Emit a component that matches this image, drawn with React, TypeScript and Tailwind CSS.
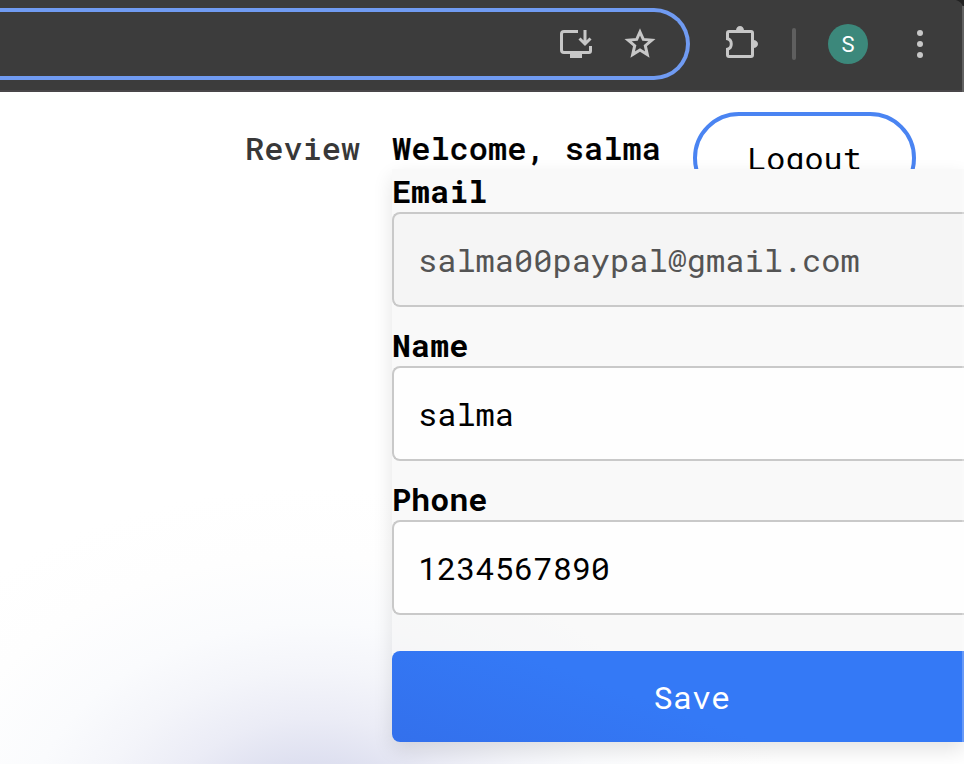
import type { ReactNode } from "react";

function InstallIcon() {
  return (
    <svg width="34" height="32" viewBox="0 0 34 32" fill="none" stroke="#c7c7c7" strokeWidth="3">
      <path d="M19 3.500H5Q2.500 3.500 2.500 6V22Q2.500 24.500 5 24.500H30Q31.500 24.500 31.500 23V18" />
      <path d="M26 2V15M20.500 10.500L26 16L31.500 10.500" />
      <path d="M11 27.500H23" strokeWidth="5" />
    </svg>
  );
}

function StarIcon() {
  return (
    <svg width="36" height="36" viewBox="0 0 36 36" fill="none" stroke="#c7c7c7" strokeWidth="3">
      <path d="M18 6L21.300 13.400L29.800 14.100L23.300 19.700L25.300 28.500L18 24L10.700 28.500L12.700 19.700L6.200 14.100L14.700 13.400Z" />
    </svg>
  );
}

function PuzzleIcon() {
  return (
    <svg width="36" height="36" viewBox="0 0 36 36">
      <path
        d="M5 6.500H27Q28.500 6.500 28.500 8V30Q28.500 31.500 27 31.500H5Q3.500 31.500 3.500 30V24.200C8.500 23 8.500 15 3.500 13.800V8Q3.500 6.500 5 6.500Z"
        fill="none"
        stroke="#c7c7c7"
        strokeWidth="3"
      />
      <path d="M12 5.500A4 4.500 0 0 1 20 5.500ZM29.500 15A4.500 4 0 0 1 29.500 23Z" fill="#c7c7c7" />
    </svg>
  );
}

function BrowserBar() {
  return (
    <div className="relative flex h-[92px] shrink-0 items-start border-b-2 border-[#494649] bg-[#3c3c3c]">
      <div className="mt-2 flex h-[72px] w-[690px] items-center justify-end rounded-r-full border-4 border-l-0 border-[#709bf2] pr-[28px]">
        <div className="mr-[29px] h-[32px]"><InstallIcon /></div>
        <StarIcon />
      </div>
      <div className="ml-[34px] mt-[25px] h-9"><PuzzleIcon /></div>
      <div className="ml-8 mt-7 h-8 w-1 rounded-sm bg-[#5f5f5f]" />
      <div className="ml-8 mt-6 flex size-10 items-center justify-center rounded-full bg-[#3c887b] font-['Roboto',sans-serif] text-[22px] text-white">S</div>
      <div className="ml-[49px] mt-[30px] flex flex-col gap-[5px]">
        <i className="size-[6px] rounded-full bg-[#c7c7c7]" />
        <i className="size-[6px] rounded-full bg-[#c7c7c7]" />
        <i className="size-[6px] rounded-full bg-[#c7c7c7]" />
      </div>
      <svg className="absolute right-0 top-0" width="8" height="8" viewBox="0 0 8 8">
        <path d="M0 0H8V8Q6 2 0 0Z" fill="#222" />
      </svg>
      <div className="absolute right-0 top-[6px] h-[86px] w-[2px] bg-[#626262]" />
    </div>
  );
}

function Field({ label, children, disabled = false }: { label: string; children: ReactNode; disabled?: boolean }) {
  return (
    <div className="mb-4">
      <div className="h-[43px] pt-px text-[31.800px] leading-[42px] font-bold">{label}</div>
      <div className={`flex h-[95px] items-center rounded-l-lg border-2 border-r-0 border-[#c9c9c9] pl-6 pt-px ${disabled ? "bg-[#f5f5f5] text-[#545454]" : "bg-white/85 text-black"}`}>
        {children}
      </div>
    </div>
  );
}

export default function App() {
  return (
    <div className="flex h-[764px] w-[964px] flex-col overflow-hidden bg-white font-['Roboto_Mono','DejaVu_Sans_Mono','Liberation_Mono',monospace] text-[32px] text-black">
      <BrowserBar />
      <main className="flex-1 overflow-hidden bg-[radial-gradient(ellipse_480px_340px_at_315px_735px,#d4d7ec_0%,#dcdeef_17%,#ebecf6_32%,#f4f5fa_46%,#fafbfd_60%,#fefefe_80%,#ffffff_100%)]">
        <header className="flex h-[77px] items-start overflow-hidden pl-[245px] leading-[42px]">
          <span className="mt-[35px] w-[147px] font-medium text-[#383838]">Review</span>
          <span className="mt-[35px] w-[301px] whitespace-nowrap font-medium [-webkit-text-stroke:0.200px_black]">Welcome, salma</span>
          <div className="mt-5 flex h-[92px] w-[223px] justify-center rounded-[46px] border-4 border-[#4a84f2] pt-[21px] text-[31.800px]">Logout</div>
        </header>
        <section className="relative ml-[392px] h-[573px] rounded-bl-lg bg-[#f3f3f3]/50 shadow-[0_8px_20px_rgba(0,0,0,0.110)]">
          <Field label="Email" disabled>salma00paypal@gmail.com</Field>
          <Field label="Name">salma</Field>
          <Field label="Phone">1234567890</Field>
          <div className="mt-[36px] flex h-[91px] items-center rounded-l-lg bg-[linear-gradient(20deg,#3370ec_0%,#3479f6_45%)] pl-[261.500px] pt-px text-white">Save</div>
          <div className="absolute right-0 top-0 h-full w-[2px] bg-white/25" />
        </section>
      </main>
    </div>
  );
}
